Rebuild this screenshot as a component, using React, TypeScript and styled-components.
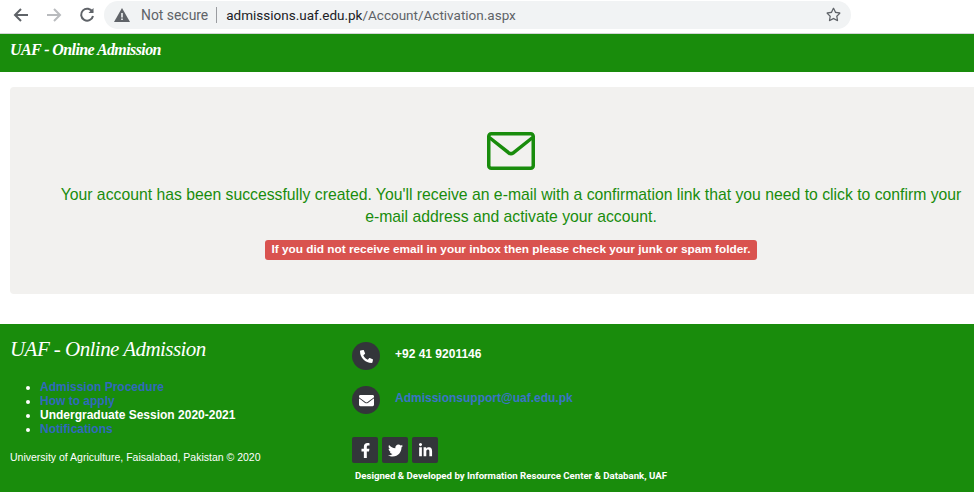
import { FC } from 'react';
import styled, { createGlobalStyle } from 'styled-components';
import { FaFacebookF, FaLinkedinIn, FaPhone, FaTwitter, FaEnvelope, FaRegStar } from 'react-icons/fa';

const Global = createGlobalStyle`
	html, body {
		margin: 0;
		padding: 0;
		background: #fff;
		font-family: 'Liberation Sans', Arial, sans-serif;
	}
	* {
		box-sizing: border-box;
	}
`;

const Page = styled.div`
	width: 974px;
	height: 492px;
	overflow: hidden;
	display: flex;
	flex-direction: column;
`;

const Toolbar = styled.div`
	height: 34px;
	flex: none;
	display: flex;
	align-items: center;
	padding: 0 123px 4px 13px;
	border-bottom: 1px solid #d3d5d6;
`;

const NavButton = styled.svg<{ $dim?: boolean }>`
	width: 16px;
	height: 16px;
	flex: none;
	margin-right: 17px;
	fill: none;
	stroke: ${(p) => (p.$dim ? '#b9bbbe' : '#5f6368')};
	stroke-width: 2;
`;

const Omnibox = styled.div`
	flex: 1;
	height: 28px;
	margin-left: -8px;
	padding: 0 10px 0 10px;
	display: flex;
	align-items: center;
	background: #f1f3f4;
	border-radius: 14px;
	font-family: 'Roboto', sans-serif;
`;

const NotSecure = styled.span`
	color: #5f6368;
	font-size: 13.9px;
	margin-left: 11px;
	padding-right: 8px;
	border-right: 1px solid #9a9ca0;
	line-height: 16px;
`;

const Url = styled.span`
	color: #5f6368;
	font-size: 13.5px;
	margin-left: 9px;
	flex: 1;
	b {
		font-weight: 400;
		color: #202124;
	}
`;

const StarIcon = styled(FaRegStar)`
	color: #5f6368;
	font-size: 15px;
`;

const Header = styled.div`
	height: 38px;
	flex: none;
	background: #198c0c;
	padding: 6px 10px;
`;

const Brand = styled.div<{ $big?: boolean }>`
	font-family: 'Liberation Serif', cursive;
	font-style: italic;
	font-weight: ${(p) => (p.$big ? 400 : 700)};
	font-size: ${(p) => (p.$big ? 21 : 16)}px;
	letter-spacing: ${(p) => (p.$big ? -0.55 : -0.6)}px;
	line-height: ${(p) => (p.$big ? 30 : 20)}px;
	color: #fff;
`;

const Main = styled.div`
	flex: 1;
	padding: 15px 0 30px 10px;
`;

const Panel = styled.div`
	height: 207px;
	background: #f2f1ef;
	border-radius: 4px 0 0 4px;
	padding: 45px 0 0 38px;
	display: flex;
	flex-direction: column;
	align-items: center;
	text-align: center;
`;

const MailIcon = styled.svg`
	width: 48px;
	height: 38px;
	flex: none;
	fill: none;
	stroke: #198c0c;
	stroke-width: 3.5;
`;

const Message = styled.p`
	margin: 14px 0 0;
	width: 910px;
	font-size: 15.75px;
	line-height: 22px;
	color: #198c0c;
`;

const Alert = styled.span`
	margin-top: 12px;
	padding: 0 6px;
	height: 20px;
	line-height: 18px;
	background: #d9534f;
	border-radius: 3px;
	color: #fff;
	font-size: 11.83px;
	font-weight: 700;
`;

const Footer = styled.div`
	height: 168px;
	flex: none;
	background: #198c0c;
	display: flex;
	color: #fff;
`;

const FooterLeft = styled.div`
	width: 352px;
	flex: none;
	padding: 10px 0 0 10px;
`;

const LinkList = styled.ul`
	margin: 16px 0 0;
	padding: 0 0 0 30px;
	font-size: 12px;
	font-weight: 700;
	line-height: 14px;
`;

const LinkItem = styled.li`
	color: #fff;
`;

const FooterLink = styled.a<{ $bright?: boolean }>`
	color: ${(p) => (p.$bright ? '#3a74c8' : '#3069bd')};
	text-decoration: none;
`;

const Copyright = styled.div`
	margin-top: 14px;
	font-size: 10.5px;
	line-height: 14px;
`;

const FooterRight = styled.div`
	flex: 1;
	padding-top: 18px;
`;

const ContactRow = styled.div`
	display: flex;
	align-items: flex-start;
	gap: 15px;
	height: 44px;
	font-size: 12px;
	font-weight: 700;
	line-height: 24px;
`;

const ContactIcon = styled.div<{ $size: number }>`
	width: 28px;
	height: 28px;
	flex: none;
	border-radius: 50%;
	background: #33363a;
	display: flex;
	align-items: center;
	justify-content: center;
	color: #fff;
	font-size: ${(p) => p.$size}px;
`;

const PhoneGlyph = styled(FaPhone)`
	transform: scaleX(-1);
`;

const Socials = styled.div`
	display: flex;
	gap: 4px;
	margin-top: 7px;
`;

const SocialButton = styled.div`
	width: 26px;
	height: 26px;
	border-radius: 2px;
	background: #33363a;
	display: flex;
	align-items: center;
	justify-content: center;
	color: #fff;
	font-size: 15px;
`;

const Credit = styled.div`
	margin: 6px 0 0 3px;
	font-family: 'Roboto', sans-serif;
	font-size: 9.65px;
	font-weight: 700;
	line-height: 14px;
`;

const links = [
	{ label: 'Admission Procedure', href: '#' },
	{ label: 'How to apply', href: '#' },
	{ label: 'Undergraduate Session 2020-2021' },
	{ label: 'Notifications', href: '#' },
];

const App: FC = () => {
	return (
		<Page>
			<Global />
			<Toolbar>
				<NavButton viewBox="0 0 16 16">
					<path d="M15 8H2M8 2 2 8l6 6" />
				</NavButton>
				<NavButton viewBox="0 0 16 16" $dim>
					<path d="M1 8h13M8 2l6 6-6 6" />
				</NavButton>
				<NavButton viewBox="0 0 16 16">
					<path d="M13.5 5A6 6 0 1 0 14 9" />
					<path d="M14.5 1v5h-5" fill="#5f6368" stroke="none" />
				</NavButton>
				<Omnibox>
					<svg width="16" height="14" viewBox="0 0 16 14">
						<path d="M8 0 16 14H0Z" fill="#5f6368" />
						<path d="M7.2 5h1.6v4.5H7.2zM7.2 10.5h1.6V12H7.2z" fill="#f1f3f4" />
					</svg>
					<NotSecure>Not secure</NotSecure>
					<Url>
						<b>admissions.uaf.edu.pk</b>/Account/Activation.aspx
					</Url>
					<StarIcon />
				</Omnibox>
			</Toolbar>
			<Header>
				<Brand>UAF - Online Admission</Brand>
			</Header>
			<Main>
				<Panel>
					<MailIcon viewBox="0 0 48 38">
						<rect x="1.75" y="1.75" width="44.5" height="34.5" rx="2.5" />
						<path d="M3 6 22 21q2 1.5 4 0L45 6" strokeLinecap="round" />
					</MailIcon>
					<Message>
						Your account has been successfully created. You'll receive an e-mail with a confirmation link that you need to click to confirm your e-mail address and activate your account.
					</Message>
					<Alert>If you did not receive email in your inbox then please check your junk or spam folder.</Alert>
				</Panel>
			</Main>
			<Footer>
				<FooterLeft>
					<Brand $big>UAF - Online Admission</Brand>
					<LinkList>
						{links.map((l) => (
							<LinkItem key={l.label}>
								{l.href ? <FooterLink href={l.href}>{l.label}</FooterLink> : l.label}
							</LinkItem>
						))}
					</LinkList>
					<Copyright>University of Agriculture, Faisalabad, Pakistan © 2020</Copyright>
				</FooterLeft>
				<FooterRight>
					<ContactRow>
						<ContactIcon $size={13}>
							<PhoneGlyph />
						</ContactIcon>
						+92 41 9201146
					</ContactRow>
					<ContactRow>
						<ContactIcon $size={15}>
							<FaEnvelope />
						</ContactIcon>
						<FooterLink href="#" $bright>Admissionsupport@uaf.edu.pk</FooterLink>
					</ContactRow>
					<Socials>
						<SocialButton>
							<FaFacebookF />
						</SocialButton>
						<SocialButton>
							<FaTwitter />
						</SocialButton>
						<SocialButton>
							<FaLinkedinIn />
						</SocialButton>
					</Socials>
					<Credit>Designed &amp; Developed by Information Resource Center &amp; Databank, UAF</Credit>
				</FooterRight>
			</Footer>
		</Page>
	);
};

export default App;
